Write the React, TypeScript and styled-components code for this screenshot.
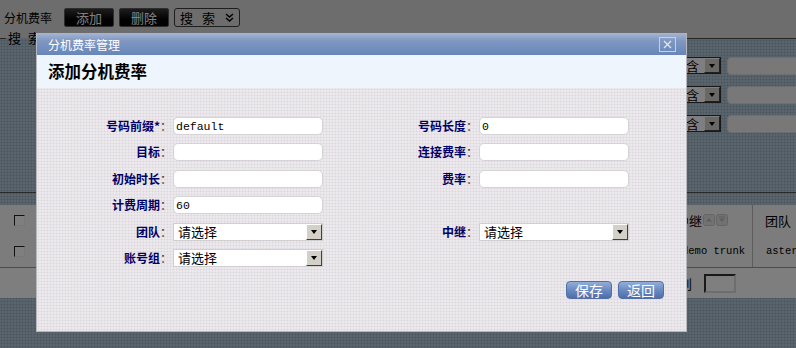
import React from 'react'
import styled, { createGlobalStyle } from 'styled-components'

const cjk = `"Noto Sans CJK SC", "Liberation Sans", sans-serif`
const mono = `"Liberation Mono", "DejaVu Sans Mono", monospace`

const GlobalStyle = createGlobalStyle`
  html, body {
    margin: 0;
    padding: 0;
  }
  body {
    font-family: ${cjk};
    font-size: 12px;
    color: #000;
    overflow: hidden;
  }
`

const Page = styled.div`
  position: relative;
  width: 796px;
  height: 348px;
  overflow: hidden;
  background-color: #b2c8da;
  background-image: radial-gradient(rgba(0, 0, 0, 0.16) 0.8px, transparent 1.1px);
  background-size: 3px 3px;
`

const Header = styled.div`
  background: #dadada;
`

const Toolbar = styled.div`
  display: flex;
  align-items: center;
  gap: 5px;
  height: 19px;
  padding: 8px 0 3px 4px;
`

const PageTitle = styled.span`
  font-size: 12px;
  line-height: 19px;
  margin-right: 7px;
`

const DarkButton = styled.button`
  width: 50px;
  height: 19px;
  padding: 0;
  border: 1px solid #5a5a5a;
  border-radius: 2px;
  background: linear-gradient(#3a3a3a, #050505 60%);
  color: #fff;
  font-family: ${cjk};
  font-size: 13px;
  line-height: 17px;
`

const SearchToggle = styled.div`
  display: flex;
  align-items: center;
  justify-content: space-between;
  width: 66px;
  height: 19px;
  box-sizing: border-box;
  padding: 0 5px 0 5px;
  border: 1px solid #3c3c3c;
  border-radius: 3px;
  font-size: 13px;
  word-spacing: 6px;
`

const SearchSet = styled.fieldset`
  margin: 0 0 12px;
  padding: 0;
  min-width: 0;
  border: 0;
  border-top: 1px solid #4a4a4a;
  border-bottom: 1px solid #555;
  background-color: #b2c8da;
  background-image: radial-gradient(rgba(0, 0, 0, 0.16) 0.8px, transparent 1.1px);
  background-size: 3px 3px;
`

const Legend = styled.legend`
  margin-left: 6px;
  padding: 0 2px;
  font-size: 13px;
  line-height: 16px;
  word-spacing: 4px;
`

const Conditions = styled.div`
  display: flex;
  flex-direction: column;
  gap: 11px;
  height: 146px;
  box-sizing: border-box;
  padding-top: 11px;
`

const ConditionRow = styled.div`
  display: flex;
  justify-content: flex-end;
  gap: 6px;
  margin-right: -14px;
`

const MatchSelect = styled.div`
  display: flex;
  width: 51px;
  height: 17px;
  box-sizing: border-box;
  border: 1px solid #333;
  background: #fff;
  font-size: 13px;
  line-height: 15px;
`

const MatchText = styled.span`
  flex: 1;
  padding-left: 2px;
`

const ArrowBox = styled.span<{ $w: number }>`
  display: flex;
  align-items: center;
  justify-content: center;
  width: ${({ $w }) => $w}px;
  box-sizing: border-box;
  border: 1px solid;
  border-color: #fff #404040 #404040 #fff;
  background: #d4d0c8;

  &::after {
    content: '';
    border-left: 3.5px solid transparent;
    border-right: 3.5px solid transparent;
    border-top: 4px solid #000;
  }
`

const ConditionInput = styled.div`
  width: 81px;
  height: 16px;
  border: 1px solid #ddd;
  border-radius: 4px;
  background: #f0f0f0;
`

const Table = styled.div`
  background: #f8f8f8;
`

const TableRow = styled.div<{ $h: number }>`
  display: grid;
  grid-template-columns: 40px 1fr 88px 44px;
  height: ${({ $h }) => $h}px;
`

const Cell = styled.div<{ $pad?: number; $divider?: boolean }>`
  display: flex;
  align-items: center;
  padding-left: ${({ $pad }) => $pad ?? 0}px;
  border-left: ${({ $divider }) => ($divider ? '1px solid #bbb' : '0')};
  white-space: nowrap;
  overflow: hidden;
  font-size: 13px;
`

const MonoText = styled.span`
  font-family: ${mono};
  font-size: 10.5px;
`

const CheckBox = styled.span`
  width: 11px;
  height: 11px;
  box-sizing: border-box;
  border: 1px solid;
  border-color: #222 #eee #eee #222;
  background: #fff;
  margin-left: 14px;
`

const Pager = styled.div`
  display: flex;
  align-items: center;
  justify-content: flex-end;
  gap: 12px;
  height: 30px;
  padding-right: 60px;
  border-top: 1px solid #999;
  background: #fcfcfc;
  font-size: 13px;
`

const PageInput = styled.span`
  width: 32px;
  height: 19px;
  box-sizing: border-box;
  border: 2px solid;
  border-color: #333 #ddd #ddd #333;
  background: #fff;
`

const Overlay = styled.div`
  position: absolute;
  inset: 0;
  background: rgba(0, 0, 0, 0.5);
`

const Dialog = styled.div`
  position: absolute;
  left: 36px;
  top: 33px;
  width: 651px;
  height: 299px;
  display: flex;
  flex-direction: column;
  box-sizing: border-box;
  border: 1px solid #b4b6bc;
  border-top: 0;
`

const TitleBar = styled.div`
  display: flex;
  align-items: center;
  justify-content: space-between;
  height: 22px;
  padding: 0 10px 0 11px;
  background: linear-gradient(#a6b6d3, #8098c2 35%, #6786b8);
  color: #fff;
  font-size: 12px;
`

const CloseBox = styled.span`
  display: flex;
  align-items: center;
  justify-content: center;
  width: 17px;
  height: 15px;
  box-sizing: border-box;
  border: 1px solid #c4d1e6;
`

const Heading = styled.div`
  height: 33px;
  padding-left: 11px;
  background: #eef5fd;
  font-size: 16.5px;
  font-weight: 700;
  line-height: 33px;
`

const Body = styled.div`
  flex: 1;
  padding-top: 29px;
  background-color: #ece9ed;
  background-image: radial-gradient(#d9d5da 0.8px, transparent 1.1px);
  background-size: 3px 3px;
`

const Form = styled.div`
  display: grid;
  grid-template-columns: 135px 150px 154px 150px;
  grid-auto-rows: 18px;
  column-gap: 1px;
  row-gap: 8.4px;
`

const Label = styled.label`
  text-align: right;
  white-space: nowrap;
  font-size: 12px;
  font-weight: 700;
  line-height: 18px;
  color: #000066;
`

const Colon = styled.span`
  font-weight: 400;
  color: #333;
`

const TextInput = styled.input`
  width: 150px;
  height: 18px;
  box-sizing: border-box;
  margin: 0;
  padding: 0 2px;
  border: 1px solid #d4d4d4;
  border-radius: 5px;
  background: #fff;
  font-family: ${mono};
  font-size: 11.5px;
  color: #000;
  outline: none;
`

const Combo = styled.div`
  display: flex;
  width: 150px;
  height: 18px;
  box-sizing: border-box;
  border: 1px solid #cfcfcf;
  background: #fff;
`

const ComboText = styled.span`
  flex: 1;
  padding-left: 4px;
  font-size: 13px;
  line-height: 16px;
`

const Actions = styled.div`
  display: flex;
  justify-content: flex-end;
  gap: 6px;
  margin-top: 14px;
  padding-right: 22px;
`

const BlueButton = styled.button`
  width: 46px;
  height: 18px;
  padding: 0;
  border: 1px solid #4f6fa6;
  border-radius: 4px;
  background: linear-gradient(#93add8, #6a8bc2 50%, #4e6ea8);
  color: #fff;
  font-family: ${cjk};
  font-size: 14px;
  line-height: 16px;
`

const Chevrons = () => (
  <svg width="9" height="9" viewBox="0 0 9 9">
    <path d="M1 1 L4.5 4 L8 1 M1 5 L4.5 8 L8 5" fill="none" stroke="#000" strokeWidth="1.4" />
  </svg>
)

const SortIcons = () => (
  <svg width="26" height="12" viewBox="0 0 26 12" style={{ marginLeft: 1 }}>
    <rect x="0.5" y="0.5" width="11" height="11" rx="2" fill="#e4e4e4" stroke="#c8c8c8" />
    <path d="M3 7.5 L6 4 L9 7.5 Z" fill="#bbb" />
    <rect x="13.5" y="0.5" width="11" height="11" rx="2" fill="#e4e4e4" stroke="#c8c8c8" />
    <path d="M16 4.5 L19 8 L22 4.5 Z" fill="#bbb" />
    <path d="M16 3 H22" stroke="#bbb" />
  </svg>
)

const CloseIcon = () => (
  <svg width="9" height="9" viewBox="0 0 9 9">
    <path d="M1 1 L8 8 M8 1 L1 8" stroke="#dfe7f4" strokeWidth="1.3" />
  </svg>
)

type Field = { label: string; required?: boolean; kind: 'text' | 'select'; value?: string }

const rows: [Field | null, Field | null][] = [
  [{ label: '号码前缀', required: true, kind: 'text', value: 'default' }, { label: '号码长度', kind: 'text', value: '0' }],
  [{ label: '目标', kind: 'text' }, { label: '连接费率', kind: 'text' }],
  [{ label: '初始时长', kind: 'text' }, { label: '费率', kind: 'text' }],
  [{ label: '计费周期', kind: 'text', value: '60' }, null],
  [{ label: '团队', kind: 'select' }, { label: '中继', kind: 'select' }],
  [{ label: '账号组', kind: 'select' }, null],
]

const FieldCells: React.FC<{ field: Field | null }> = ({ field }) => {
  if (!field) {
    return (
      <>
        <span />
        <span />
      </>
    )
  }
  return (
    <>
      <Label>
        {field.label}
        {field.required && '*'}
        <Colon>：</Colon>
      </Label>
      {field.kind === 'text' ? (
        <TextInput defaultValue={field.value ?? ''} />
      ) : (
        <Combo>
          <ComboText>请选择</ComboText>
          <ArrowBox $w={16} />
        </Combo>
      )}
    </>
  )
}

export default function App() {
  return (
    <>
      <GlobalStyle />
      <Page>
        <Header>
          <Toolbar>
            <PageTitle>分机费率</PageTitle>
            <DarkButton>添加</DarkButton>
            <DarkButton>删除</DarkButton>
            <SearchToggle>
              <span>搜 索</span>
              <Chevrons />
            </SearchToggle>
          </Toolbar>
          <SearchSet>
            <Legend>搜 索</Legend>
            <Conditions>
              {['号码前缀', '目标', '费率'].map((name) => (
                <ConditionRow key={name}>
                  <span>{name}</span>
                  <MatchSelect>
                    <MatchText>包含</MatchText>
                    <ArrowBox $w={16} />
                  </MatchSelect>
                  <ConditionInput />
                </ConditionRow>
              ))}
            </Conditions>
          </SearchSet>
        </Header>

        <Table>
          <TableRow $h={30}>
            <Cell>
              <CheckBox />
            </Cell>
            <Cell $pad={12}>号码前缀</Cell>
            <Cell $pad={12}>
              中继
              <SortIcons />
            </Cell>
            <Cell $pad={12} $divider>
              团队
            </Cell>
          </TableRow>
          <TableRow $h={32}>
            <Cell>
              <CheckBox />
            </Cell>
            <Cell $pad={12}>
              <MonoText>default</MonoText>
            </Cell>
            <Cell $pad={18}>
              <MonoText>demo trunk</MonoText>
            </Cell>
            <Cell $pad={13} $divider>
              <MonoText>asterisk</MonoText>
            </Cell>
          </TableRow>
          <Pager>
            <span>跳到</span>
            <PageInput />
          </Pager>
        </Table>

        <Overlay>
          <Dialog>
            <TitleBar>
              <span>分机费率管理</span>
              <CloseBox>
                <CloseIcon />
              </CloseBox>
            </TitleBar>
            <Heading>添加分机费率</Heading>
            <Body>
              <Form>
                {rows.map(([left, right], i) => (
                  <React.Fragment key={i}>
                    <FieldCells field={left} />
                    <FieldCells field={right} />
                  </React.Fragment>
                ))}
              </Form>
              <Actions>
                <BlueButton>保存</BlueButton>
                <BlueButton>返回</BlueButton>
              </Actions>
            </Body>
          </Dialog>
        </Overlay>
      </Page>
    </>
  )
}
